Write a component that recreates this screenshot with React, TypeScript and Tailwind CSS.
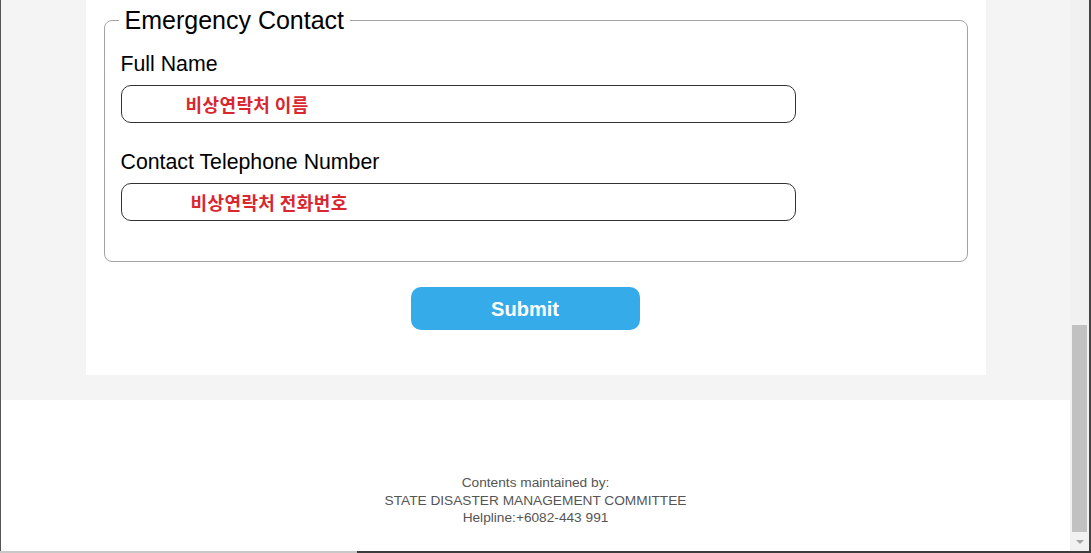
const sans = "font-['Liberation_Sans',Arial,'Noto_Sans_CJK_KR',sans-serif]";

const Field = ({ label, placeholder, indent }: { label: string; placeholder: string; indent: string }) => (
  <div className="flex flex-col">
    <label className="text-[21.3px] leading-[24px] text-black">{label}</label>
    <input
      type="text"
      placeholder={placeholder}
      className={`mt-[9px] h-[38px] w-[675px] rounded-[10px] border border-[#333] bg-white ${indent} font-['Noto_Sans_CJK_KR',sans-serif] text-[18px] font-bold tracking-[0.4px] text-[#d9262f] outline-none placeholder:text-[#d9262f]`}
    />
  </div>
);

const App = () => {
  return (
    <div className={`flex h-[553px] w-[1091px] flex-col overflow-hidden bg-white ${sans}`}>
      <div className="flex min-h-0 flex-1">
        {/* left window edge */}
        <div className="w-px bg-[#555]"></div>

        {/* page */}
        <div className="flex flex-1 flex-col bg-[#f4f4f4]">
          <div className="mx-auto w-[900px] bg-white px-[18px] pt-[6px] pb-[45px]">
            <fieldset className="rounded-[8px] border border-[#a3a3a3] px-4 pt-[18px] pb-[40px]">
              <legend className="ml-[-2px] px-[6px] text-[25px] leading-[28px] text-black">
                Emergency Contact
              </legend>
              <div className="flex flex-col gap-[27px]">
                <Field label="Full Name" placeholder="비상연락처 이름" indent="pl-[64px]" />
                <Field label="Contact Telephone Number" placeholder="비상연락처 전화번호" indent="pl-[69px]" />
              </div>
            </fieldset>
            <div className="mt-[25px] pl-[307px]">
              <button
                type="button"
                className="h-[43px] w-[229px] rounded-[10px] bg-[#35abe9] text-[20px] font-bold text-white"
              >
                Submit
              </button>
            </div>
          </div>

          <div className="h-[25px]"></div>

          {/* Footer */}
          <div className="flex-1 bg-white pt-[74px] text-center text-[13.7px] leading-[17.5px] text-[#555]">
            <p>Contents maintained by:</p>
            <p>STATE DISASTER MANAGEMENT COMMITTEE</p>
            <p>Helpline:+6082-443 991</p>
          </div>
        </div>

        {/* scrollbar */}
        <div className="flex w-[19px] flex-col justify-end bg-[#f1f1f1]">
          <div className="mx-[2px] h-[207px] bg-[#c1c1c1]"></div>
          <div className="flex h-[19px] items-center justify-center">
            <div className="h-0 w-0 border-x-[4px] border-t-[4px] border-x-transparent border-t-[#a3a3a3]"></div>
          </div>
        </div>
        <div className="w-[2px] bg-[#444]"></div>
      </div>

      {/* bottom window edge */}
      <div className="flex h-[2px]">
        <div className="w-[357px] bg-[#c8c8c8]"></div>
        <div className="flex-1 bg-[#3c3c3c]"></div>
      </div>
    </div>
  );
};

export default App;
